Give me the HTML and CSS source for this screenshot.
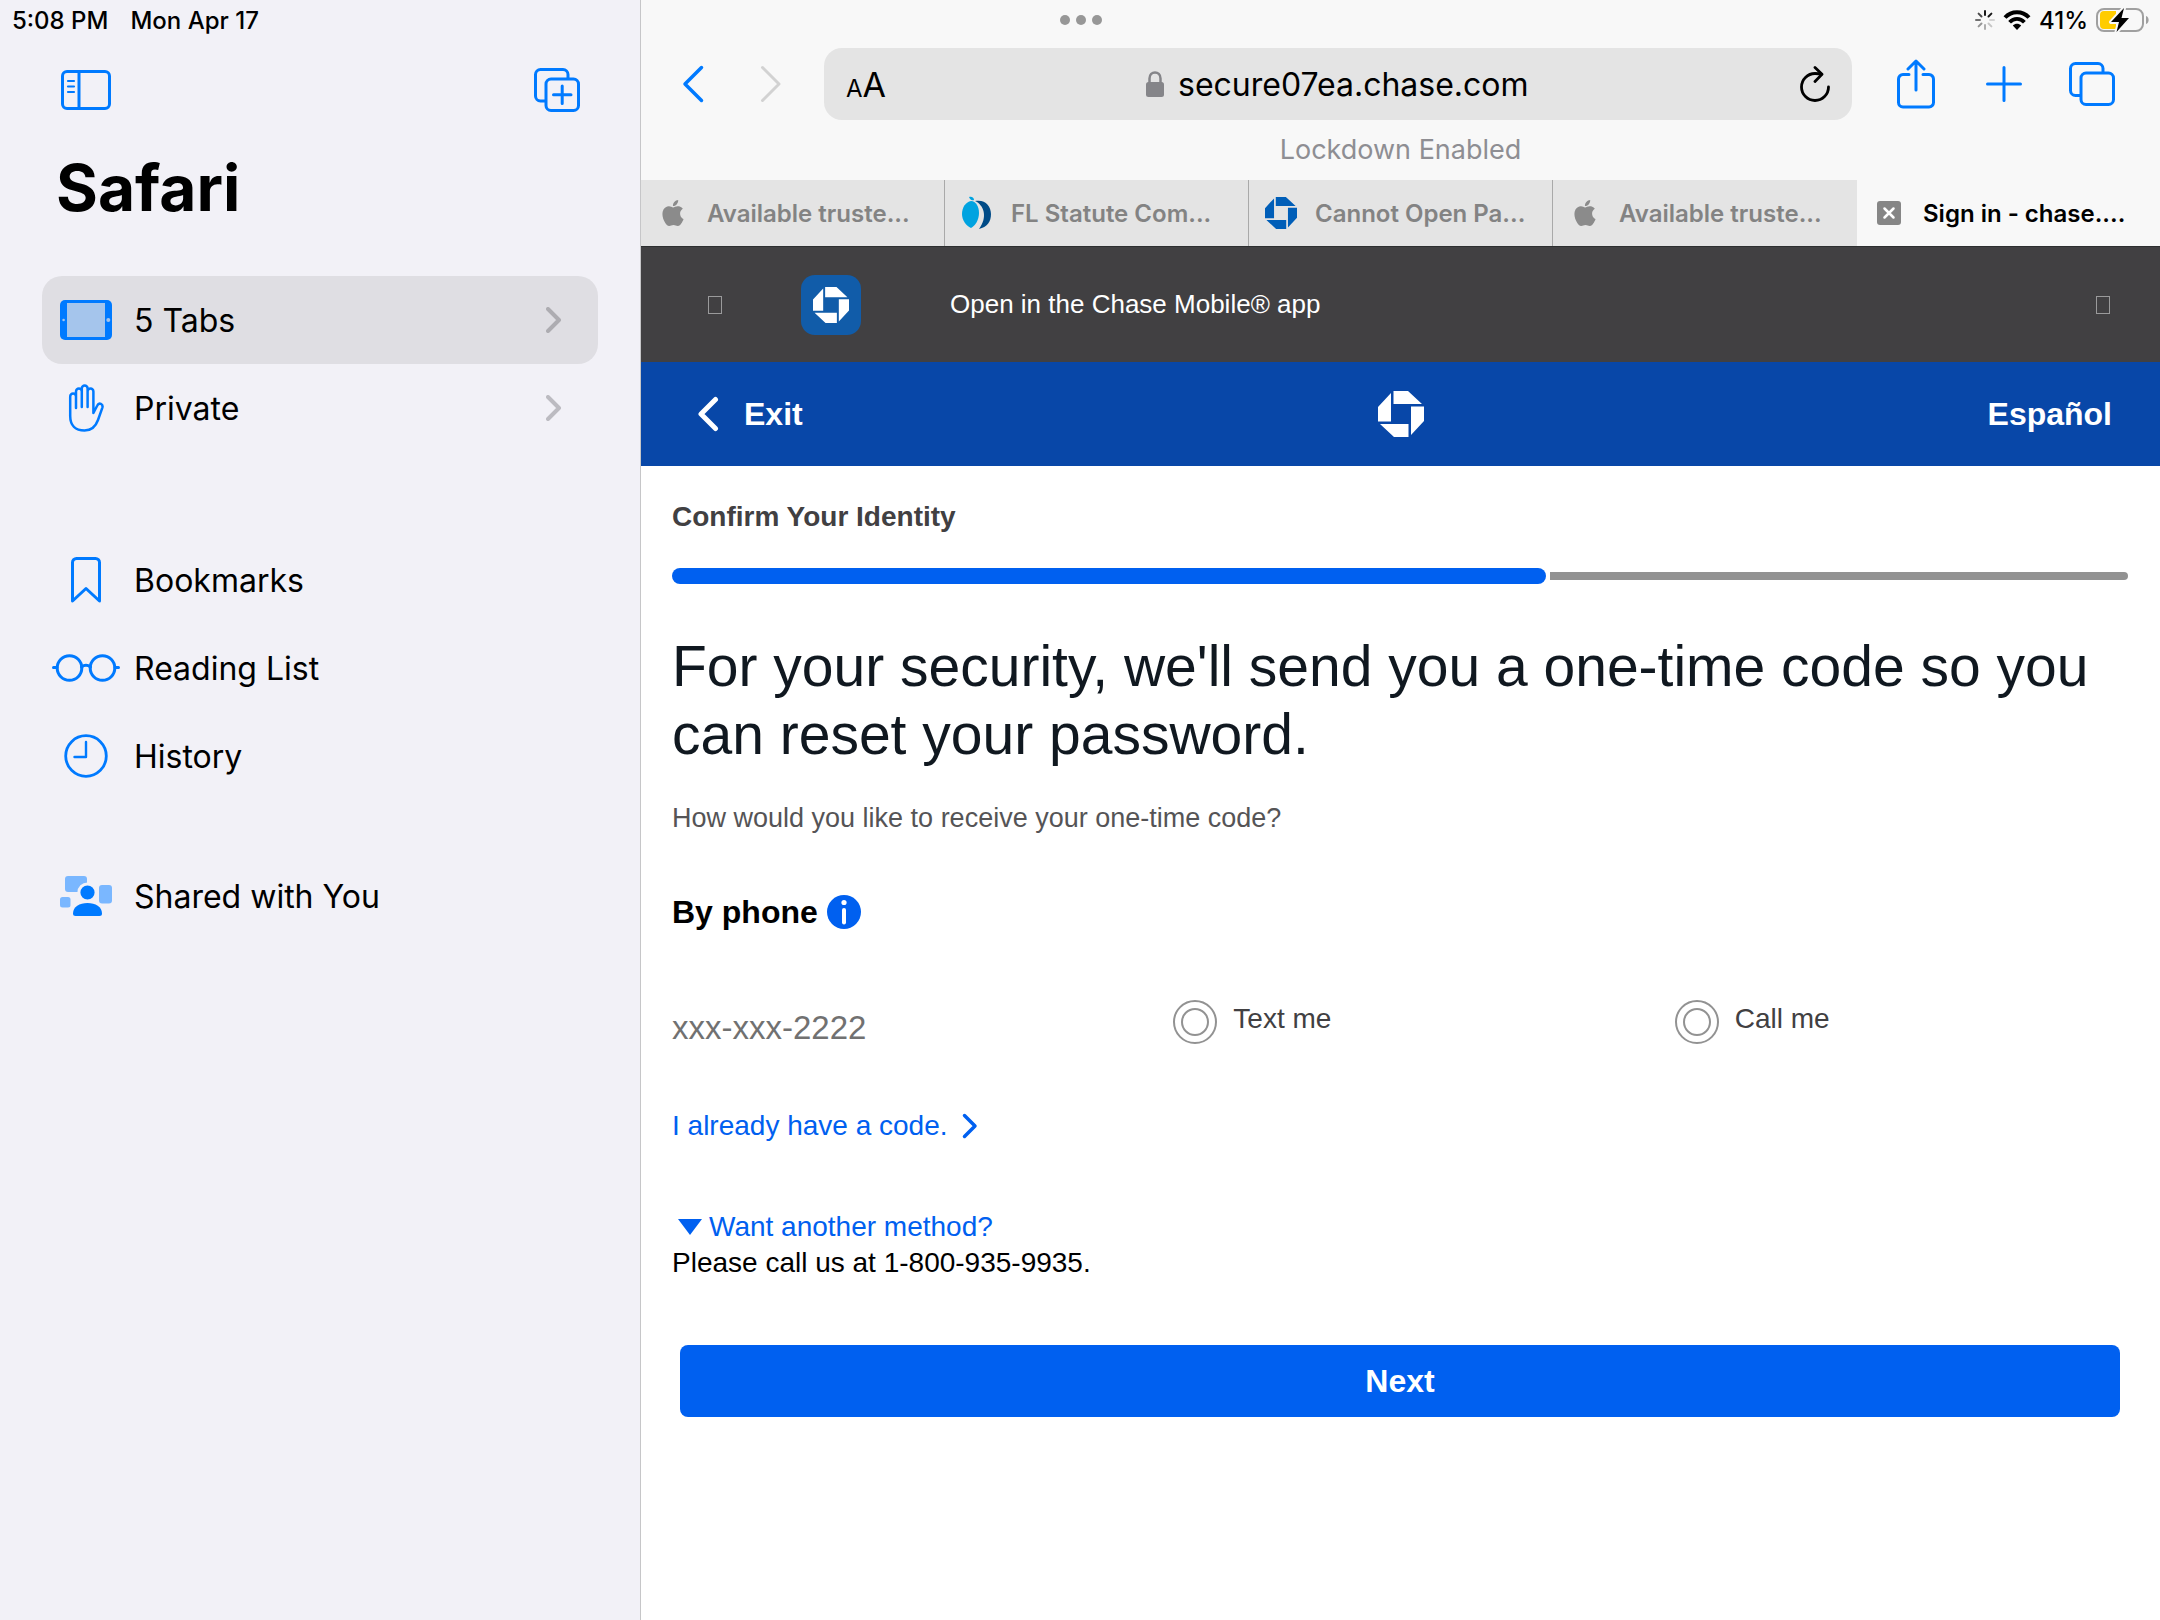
FILE: index.html
```html
<!DOCTYPE html>
<html lang="en">
<head>
<meta charset="utf-8">
<meta name="viewport" content="width=device-width, initial-scale=1">
<title>Sign in - chase.com</title>
<link rel="stylesheet" href="styles.css">
</head>
<body>
<svg class="defs" aria-hidden="true">
  <symbol id="octagon" viewBox="0 0 46 46">
    <path d="M15.5 0H30L44 13H15.5zM46 15.5V30L33 44V15.5zM30.5 46H16L2 33H30.5zM0 30.5V16L13 2V30.5z"/>
  </symbol>
  <symbol id="apple" viewBox="0 0 24 24">
    <path d="M12.152 6.896c-.948 0-2.415-1.078-3.96-1.04-2.04.027-3.91 1.183-4.961 3.014-2.117 3.675-.546 9.103 1.519 12.09 1.013 1.454 2.208 3.09 3.792 3.039 1.52-.065 2.09-.987 3.935-.987 1.831 0 2.35.987 3.96.948 1.637-.026 2.676-1.48 3.676-2.948 1.156-1.688 1.636-3.325 1.662-3.415-.039-.013-3.182-1.221-3.22-4.857-.026-3.04 2.48-4.494 2.597-4.559-1.429-2.09-3.623-2.324-4.39-2.376-2-.156-3.675 1.09-4.61 1.09zM15.53 3.83c.843-1.012 1.4-2.427 1.245-3.83-1.207.052-2.662.805-3.532 1.818-.78.896-1.454 2.338-1.273 3.714 1.338.104 2.715-.688 3.559-1.701"/>
  </symbol>
  <symbol id="disclosure" viewBox="0 0 16 26">
    <path d="M2 2L13 13L2 24" fill="none" stroke="currentColor" stroke-width="4" stroke-linecap="round" stroke-linejoin="round"/>
  </symbol>
</svg>

<div class="status">
  <div class="status-left"><span>5:08 PM</span><span>Mon Apr 17</span></div>
  <div class="dots"><i></i><i></i><i></i></div>
  <div class="status-right">
    <svg width="20" height="20" viewBox="0 0 20 20" fill="none" stroke="#000" stroke-width="2" stroke-linecap="round">
      <path d="M10 1V5" opacity=".9"/><path d="M16.4 3.6L13.5 6.5" opacity=".9"/><path d="M19 10H15" opacity=".15"/><path d="M16.4 16.4L13.5 13.5" opacity=".2"/><path d="M10 19V15" opacity=".3"/><path d="M3.6 16.4L6.5 13.5" opacity=".4"/><path d="M1 10H5" opacity=".55"/><path d="M3.6 3.6L6.5 6.5" opacity=".7"/>
    </svg>
    <svg width="28" height="20" viewBox="0 0 28 20">
      <path d="M2 7.5C8.500 .4 19.500 .4 26 7.500" fill="none" stroke="#000" stroke-width="4"/>
      <path d="M6.600 12.200C10.800 7.700 17.200 7.700 21.400 12.200" fill="none" stroke="#000" stroke-width="3.800"/>
      <path d="M14 20L9.800 15.500C12.200 13.200 15.800 13.200 18.200 15.500z"/>
    </svg>
    <span>41%</span>
    <svg width="54" height="26" viewBox="0 0 54 26">
      <rect x="1" y="2" width="46" height="22" rx="7" fill="none" stroke="#a0a0a0" stroke-width="2"/>
      <path d="M50 9C53.500 10 53.500 16 50 17z" fill="#a0a0a0"/>
      <path d="M8 4H20V22H8Q4 22 4 18V8Q4 4 8 4z" fill="#fc0"/>
      <path d="M28 1L15 15H23L20.500 25L33 11H25.500z" fill="#000" stroke="#f8f8f8" stroke-width="4" paint-order="stroke" stroke-linejoin="round"/>
    </svg>
  </div>
</div>

<aside class="sidebar">
  <div class="side-tools">
    <button type="button" aria-label="Hide sidebar">
      <svg width="50" height="40" viewBox="0 0 50 40" fill="none" stroke="currentColor" stroke-width="3">
        <rect x="1.500" y="1.500" width="47" height="37" rx="4.500"/><path d="M18 1.500V38.500"/><path d="M7 11H13M7 16.500H13M7 22H13" stroke-width="2.200" stroke-linecap="round"/>
      </svg>
    </button>
    <button type="button" aria-label="New tab group">
      <svg width="46" height="44" viewBox="0 0 46 44" fill="none" stroke="currentColor" stroke-width="3" stroke-linecap="round">
        <path d="M11 33H6.500A5 5 0 0 1 1.500 28V6.500A5 5 0 0 1 6.500 1.500H29A5 5 0 0 1 34 6.500V10"/><rect x="12" y="11" width="32.500" height="31.500" rx="5"/><path d="M28.200 18V35.500M19.500 26.800H37"/>
      </svg>
    </button>
  </div>
  <h1 class="side-title">Safari</h1>
  <nav>
    <ul class="side-list">
      <li><a class="row selected" href="#tabs">
        <svg width="52" height="40" viewBox="0 0 52 40"><rect width="52" height="40" rx="5" fill="#007aff"/><rect x="7" y="3" width="38" height="34" fill="#a5c5ec"/><circle cx="3.600" cy="20" r="1.300" fill="#a5c5ec"/><circle cx="48.300" cy="20" r="2" fill="#a5c5ec"/></svg>
        <span>5 Tabs</span><svg class="chev" width="16" height="26"><use href="#disclosure"/></svg></a></li>
      <li><a class="row" href="#private">
        <svg width="36" height="48" viewBox="0 0 36 48" fill="none" stroke="currentColor" stroke-width="2.500" stroke-linecap="round" stroke-linejoin="round"><path d="M8 24V7.500A2.900 2.900 0 0 1 13.800 7.500V23M13.800 7.500V4.500A2.900 2.900 0 0 1 19.600 4.500V23M19.600 7.500A2.900 2.900 0 0 1 25.400 7.500V29L29.300 21.500C31 18 35.500 20 34.300 23.800L30 36C27.500 43 23 46.500 16.500 46.500C7.500 46.500 2.200 41.500 2.200 32V12.500A2.900 2.900 0 0 1 8 12.500"/></svg>
        <span>Private</span><svg class="chev" width="16" height="26"><use href="#disclosure"/></svg></a></li>
    </ul>
    <ul class="side-list library">
      <li><a class="row" href="#bookmarks">
        <svg width="30" height="46" viewBox="0 0 30 46" fill="none" stroke="currentColor" stroke-width="3" stroke-linejoin="round"><path d="M1.500 44V5.500A4 4 0 0 1 5.500 1.500H24.500A4 4 0 0 1 28.500 5.500V44L15 31.500z"/></svg>
        <span>Bookmarks</span></a></li>
      <li><a class="row" href="#reading">
        <svg width="68" height="28" viewBox="0 0 68 28" fill="none" stroke="currentColor" stroke-width="3"><circle cx="17.500" cy="14" r="12.300"/><circle cx="50.500" cy="14" r="12.300"/><path d="M29.500 13Q34 9.500 38.500 13M1.500 13.500H5M63 13.500H66.500" stroke-linecap="round"/></svg>
        <span>Reading List</span></a></li>
      <li><a class="row" href="#history">
        <svg width="44" height="44" viewBox="0 0 44 44" fill="none" stroke="currentColor" stroke-width="2.800" stroke-linecap="round" stroke-linejoin="round"><circle cx="22" cy="22" r="20.300"/><path d="M22 8V23H10.500" stroke-width="2.400"/></svg>
        <span>History</span></a></li>
    </ul>
    <ul class="side-list shared">
      <li><a class="row" href="#shared">
        <svg width="52" height="40" viewBox="0 0 52 40"><rect x="5" width="22" height="16" rx="3" fill="#7ab7ff"/><rect x="39" y="9" width="13" height="18.500" rx="3" fill="#7ab7ff"/><rect y="21" width="10.500" height="10.500" rx="2.500" fill="#7ab7ff"/><circle cx="27.500" cy="16.500" r="8.600" fill="#007aff" stroke="#f2f1f7" stroke-width="3"/><path d="M13 37.500C13 31 19.500 27 27.500 27S42 31 42 37.500Q42 40 39.500 40H15.500Q13 40 13 37.500z" fill="#007aff"/></svg>
        <span>Shared with You</span></a></li>
    </ul>
  </nav>
</aside>

<main class="browser">
  <div class="toolbar">
    <button type="button" aria-label="Back"><svg width="22" height="38" viewBox="0 0 22 38" fill="none" stroke="currentColor" stroke-width="3.500" stroke-linecap="round" stroke-linejoin="round"><path d="M19.500 2.500L3 19L19.500 35.500"/></svg></button>
    <button type="button" class="off" aria-label="Forward"><svg width="22" height="38" viewBox="0 0 22 38" fill="none" stroke="currentColor" stroke-width="3" stroke-linecap="round" stroke-linejoin="round"><path d="M2.500 2.500L19 19L2.500 35.500"/></svg></button>
    <div class="address">
      <button type="button" class="aa" aria-label="Page settings"><small>A</small>A</button>
      <label class="url">
        <svg width="18" height="26" viewBox="0 0 18 26"><rect y="11" width="18" height="15" rx="2.500" fill="#858589"/><path d="M3.500 12V7.500C3.500 -.5 14.500 -.5 14.500 7.500V12" fill="none" stroke="#858589" stroke-width="2.500"/></svg>
        <input type="text" value="secure07ea.chase.com" aria-label="Address">
      </label>
      <button type="button" class="reload" aria-label="Reload"><svg width="30" height="36" viewBox="0 0 30 36" fill="none" stroke="currentColor" stroke-width="2.800" stroke-linecap="round" stroke-linejoin="round"><path d="M28.500 21A13.500 13.500 0 1 1 15 7.500C17.500 7.500 19.500 7.700 21.500 8.200"/><path d="M15 1.500L22 8.300L15 15.500"/></svg></button>
    </div>
    <button type="button" aria-label="Share"><svg width="38" height="50" viewBox="0 0 38 50" fill="none" stroke="currentColor" stroke-width="3" stroke-linecap="round" stroke-linejoin="round"><path d="M12 15.500H6A4.500 4.500 0 0 0 1.500 20V43.500A4.500 4.500 0 0 0 6 48H32A4.500 4.500 0 0 0 36.500 43.500V20A4.500 4.500 0 0 0 32 15.500H26M19 31V2.500M11 10L19 2L27 10"/></svg></button>
    <button type="button" aria-label="New tab"><svg width="36" height="36" viewBox="0 0 36 36" fill="none" stroke="currentColor" stroke-width="3" stroke-linecap="round"><path d="M18 1.500V34.500M1.500 18H34.500"/></svg></button>
    <button type="button" aria-label="Show tabs"><svg width="46" height="44" viewBox="0 0 46 44" fill="none" stroke="currentColor" stroke-width="3" stroke-linecap="round"><path d="M11 33.500H6.500A5 5 0 0 1 1.500 28.500V6.500A5 5 0 0 1 6.500 1.500H29A5 5 0 0 1 34 6.500V10"/><rect x="12" y="11" width="32.500" height="31.500" rx="5"/></svg></button>
  </div>
  <p class="lockdown">Lockdown Enabled</p>
  <div class="tabs">
    <a class="tab" href="#t1"><svg width="26" height="26" fill="#8b8b8b"><use href="#apple"/></svg><span>Available truste...</span></a>
    <a class="tab" href="#t2"><svg width="30" height="34" viewBox="0 0 30 34"><path d="M7 1C10 0 12 2 12 4C9 5 8 3 7 1z" fill="#00a3e0"/><path d="M9 5C14 5 17 11 17 17C17 24 13 30 9 32C4 30 0 24 0 18C0 11 4 6 9 5z" fill="#00a3e0"/><path d="M13 5C23 3 29 10 29 18C29 26 25 31 17 33C26 21 22 9 13 5z" fill="#004b87"/></svg><span>FL Statute Com...</span></a>
    <a class="tab" href="#t3"><svg width="32" height="32" fill="#005eb8"><use href="#octagon"/></svg><span>Cannot Open Pa...</span></a>
    <a class="tab" href="#t4"><svg width="26" height="26" fill="#8b8b8b"><use href="#apple"/></svg><span>Available truste...</span></a>
    <a class="tab active" href="#t5"><svg width="24" height="24" viewBox="0 0 24 24"><rect width="24" height="24" rx="3" fill="#868686"/><path d="M7.500 7.500L16.500 16.500M16.500 7.500L7.500 16.500" stroke="#fff" stroke-width="2.500" stroke-linecap="round"/></svg><span>Sign in - chase....</span></a>
  </div>

  <div class="banner">
    <button type="button" class="glyph" aria-label="Close"></button>
    <span class="app-icon"><svg width="36" height="36" fill="#fff"><use href="#octagon"/></svg></span>
    <a class="banner-text" href="#app">Open in the Chase Mobile® app</a>
    <button type="button" class="glyph" aria-label="Open app"></button>
  </div>
  <header class="site-head">
    <a class="exit" href="#exit"><svg width="22" height="36" viewBox="0 0 22 36" fill="none" stroke="#fff" stroke-width="5" stroke-linecap="round" stroke-linejoin="round"><path d="M18.500 3.500L4 18L18.500 32.500"/></svg>Exit</a>
    <svg width="46" height="46" fill="#fff"><use href="#octagon"/></svg>
    <a class="lang" href="#es">Español</a>
  </header>

  <form class="content">
    <h2 class="step">Confirm Your Identity</h2>
    <div class="progress" role="progressbar" aria-label="Progress" aria-valuenow="60"><div class="done" style="width:60%"></div><div class="todo"></div></div>
    <h1 class="headline">For your security, we'll send you a one-time code so you can reset your password.</h1>
    <p class="question">How would you like to receive your one-time code?</p>
    <h3 class="by-phone">By phone
      <svg width="34" height="34" viewBox="0 0 34 34"><circle cx="17" cy="17" r="17" fill="#0060f0"/><circle cx="17" cy="7.500" r="2.600" fill="#fff"/><path d="M17 15V27.500" stroke="#fff" stroke-width="4" stroke-linecap="round"/></svg>
    </h3>
    <div class="options">
      <span class="phone">xxx-xxx-2222</span>
      <label class="option"><input type="radio" name="method"><span>Text me</span></label>
      <label class="option"><input type="radio" name="method"><span>Call me</span></label>
    </div>
    <a class="have-code" href="#code">I already have a code. <svg width="16" height="26" viewBox="0 0 16 26" fill="none" stroke="currentColor" stroke-width="3.500" stroke-linecap="round" stroke-linejoin="round"><path d="M2.500 2.500L13 13L2.500 23.500"/></svg></a>
    <a class="another" href="#another"><svg width="24" height="16" viewBox="0 0 24 16" fill="currentColor"><path d="M0 0H24L12 16z"/></svg>Want another method?</a>
    <p class="call-us">Please call us at 1-800-935-9935.</p>
    <button type="button" class="next">Next</button>
  </form>
</main>
</body>
</html>
```
FILE: styles.css
```css
* { box-sizing: border-box; }

body {
  margin: 0;
  min-height: 100vh;
  display: flex;
  position: relative;
  background: #fff;
  color: #000;
  font-family: Inter, "Liberation Sans", sans-serif;
}

h1, h2, h3, p, ul { margin: 0; padding: 0; }
ul { list-style: none; }
a { color: inherit; text-decoration: none; }
svg { display: block; flex: none; }
button {
  display: flex;
  align-items: center;
  justify-content: center;
  padding: 0;
  border: 0;
  background: none;
  color: #007aff;
  font: inherit;
}
.defs { position: absolute; width: 0; height: 0; }

/* System status bar, drawn over both panes */
.status {
  position: absolute;
  top: 0;
  left: 0;
  right: 0;
  height: 40px;
  padding: 0 10px 0 12px;
  display: grid;
  grid-template-columns: 1fr auto 1fr;
  align-items: center;
  font-size: 24px;
  font-weight: 500;
}
.status-left { display: flex; gap: 22px; }
.dots { display: flex; gap: 6px; }
.dots i { width: 10px; height: 10px; border-radius: 50%; background: #979797; }
.status-right { display: flex; align-items: center; justify-content: flex-end; gap: 8px; }

/* Sidebar */
.sidebar {
  flex: none;
  width: 641px;
  padding: 40px 42px 0;
  border-right: 1px solid #c6c6c8;
  background: #f2f1f7;
}
.side-tools {
  height: 100px;
  padding: 0 18px 0 19px;
  display: flex;
  align-items: center;
  justify-content: space-between;
}
.side-title {
  padding: 8px 14px 48px;
  font-size: 64px;
  line-height: 80px;
  font-weight: 700;
}
.row {
  display: grid;
  grid-template-columns: 88px 1fr auto;
  align-items: center;
  height: 88px;
  padding-right: 36px;
  border-radius: 20px;
  font-size: 32px;
  color: #007aff;
}
.row > svg:first-child { justify-self: center; }
.row span { padding-left: 4px; color: #000; }
.row .chev { color: #bcbbc1; }
.selected { background: #dfdee3; }
.selected .chev { color: #adacb1; }
.library { margin-top: 84px; }
.shared { margin-top: 52px; }

/* Browser chrome */
.browser {
  flex: 1;
  min-width: 0;
  display: flex;
  flex-direction: column;
}
.toolbar {
  display: grid;
  grid-template-columns: 78px 78px 1fr 88px 88px 88px;
  padding: 48px 24px 0 13px;
  background: #f8f8f8;
}
.toolbar .off { color: #d2d2d2; }
.address {
  display: grid;
  grid-template-columns: 1fr auto 1fr;
  align-items: center;
  height: 72px;
  margin: 0 20px 0 14px;
  padding: 0 22px;
  border-radius: 18px;
  background: #e4e4e4;
}
.toolbar .aa { justify-self: start; align-items: baseline; color: #000; font-size: 34px; }
.aa small { font-size: 24px; }
.url { display: flex; align-items: center; gap: 14px; }
.url input {
  width: 352px;
  field-sizing: content;
  padding: 0;
  border: 0;
  background: none;
  color: #000;
  font: inherit;
  font-size: 32px;
}
.toolbar .reload { justify-self: end; color: #000; }
.lockdown {
  background: #f8f8f8;
  color: #8e8e93;
  font-size: 27px;
  line-height: 60px;
  text-align: center;
}
.tabs { display: flex; }
.tab {
  flex: 1;
  height: 66px;
  display: grid;
  grid-template-columns: 44px 1fr;
  gap: 12px;
  align-items: center;
  padding-left: 10px;
  border-right: 1px solid #a9a9a9;
  background: #e4e4e4;
  color: #838383;
  font-size: 24px;
  font-weight: 600;
  white-space: nowrap;
}
.tab svg { justify-self: center; }
.tab:nth-child(4) { border-right-color: #e4e4e4; }
.tab.active { border-right: 0; background: #f8f8f8; color: #000; }

/* Web page */
.banner, .site-head, .content { font-family: "Liberation Sans", Arial, sans-serif; }
.banner {
  display: flex;
  align-items: center;
  height: 116px;
  padding: 0 50px 0 67px;
  border-top: 1px solid #2d2f30;
  background: #414042;
  color: #fff;
  font-size: 26px;
}
.glyph { width: 14px; height: 18px; border: 1px solid #9a9a9b; }
.app-icon {
  display: grid;
  place-items: center;
  width: 60px;
  height: 60px;
  margin: 0 89px 0 79px;
  border-radius: 14px;
  background: #115ca9;
}
.banner-text { flex: 1; }
.site-head {
  display: grid;
  grid-template-columns: 1fr auto 1fr;
  align-items: center;
  height: 104px;
  padding: 0 48px;
  background: #0847a8;
  color: #fff;
  font-size: 32px;
  font-weight: 700;
}
.exit { display: flex; align-items: center; gap: 25px; padding-left: 8px; }
.lang { justify-self: end; }

.content { padding: 32px 32px 0 31px; font-size: 28px; }
.step { color: #414042; font-size: 28px; line-height: 38px; }
.progress { display: flex; align-items: center; gap: 4px; margin-top: 32px; }
.done { height: 16px; border-radius: 8px; background: #0060f0; }
.todo { flex: 1; height: 8px; border-radius: 0 4px 4px 0; background: #929292; }
.headline {
  margin-top: 48px;
  color: #101820;
  font-size: 57px;
  line-height: 68px;
  font-weight: 400;
}
.question { margin-top: 32px; color: #555456; font-size: 27px; line-height: 36px; }
.by-phone {
  display: flex;
  align-items: center;
  gap: 9px;
  margin-top: 56px;
  font-size: 32px;
  line-height: 40px;
}
.options {
  display: grid;
  grid-template-columns: repeat(3, 1fr);
  column-gap: 48px;
  margin-top: 68px;
  color: #414042;
}
.phone { padding-top: 10px; color: #717171; font-size: 33px; line-height: 36px; }
.option { display: flex; gap: 16px; line-height: 38px; }
.option input {
  appearance: none;
  flex: none;
  width: 44px;
  height: 44px;
  margin: 0;
  padding: 6px;
  border: 2px solid #929292;
  border-radius: 50%;
}
.option input::before {
  content: "";
  display: block;
  box-sizing: border-box;
  height: 28px;
  border: 2px solid #929292;
  border-radius: 50%;
}
.have-code, .another {
  display: flex;
  align-items: center;
  width: fit-content;
  line-height: 36px;
  color: #0060f0;
}
.have-code { gap: 14px; margin-top: 62px; }
.another { gap: 7px; margin-top: 65px; padding-left: 6px; }
.call-us { line-height: 36px; }
.next {
  width: calc(100% - 16px);
  height: 72px;
  margin: 64px 8px 0;
  border-radius: 8px;
  background: #0060f0;
  color: #fff;
  font-size: 32px;
  font-weight: 700;
}
```
